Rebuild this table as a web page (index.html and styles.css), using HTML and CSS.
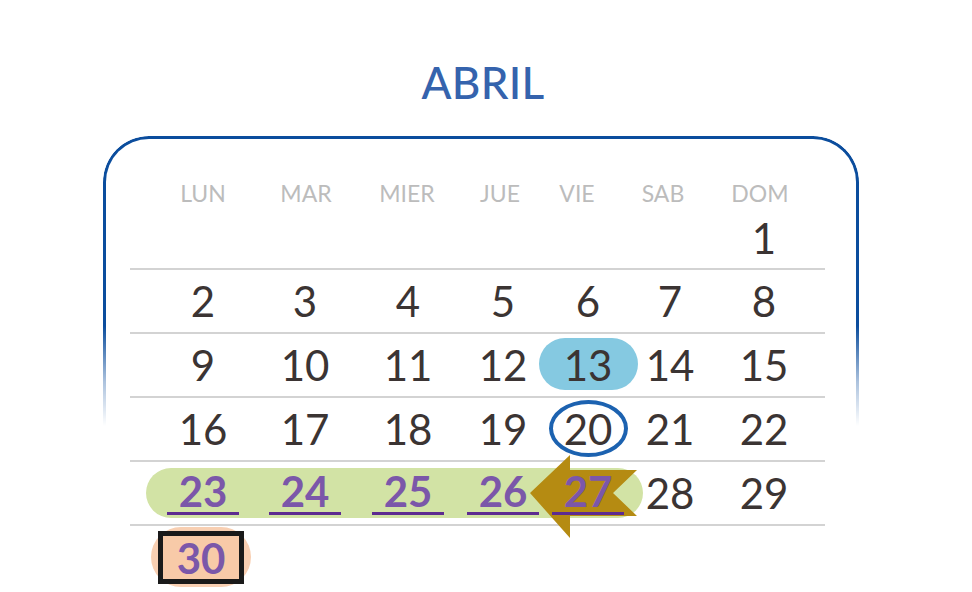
FILE: index.html
```html
<!DOCTYPE html>
<html lang="es">
<head>
<meta charset="utf-8">
<title>Abril</title>
<link rel="stylesheet" href="styles.css">
</head>
<body>
<div class="page">
  <h1 class="title">ABRIL</h1>
  <div class="cal">
    <div class="row head">
      <span>LUN</span><span>MAR</span><span>MIER</span><span>JUE</span><span>VIE</span><span>SAB</span><span>DOM</span>
    </div>
    <div class="row week first">
      <span></span><span></span><span></span><span></span><span></span><span></span><span class="cell">1</span>
    </div>
    <div class="row week">
      <span class="cell">2</span><span class="cell">3</span><span class="cell">4</span><span class="cell">5</span><span class="cell">6</span><span class="cell">7</span><span class="cell">8</span>
    </div>
    <div class="row week">
      <span class="cell">9</span><span class="cell">10</span><span class="cell">11</span><span class="cell">12</span>
      <span class="cell"><span class="pill-blue">13</span></span>
      <span class="cell">14</span><span class="cell">15</span>
    </div>
    <div class="row week">
      <span class="cell">16</span><span class="cell">17</span><span class="cell">18</span><span class="cell">19</span>
      <span class="cell"><span class="ring">20</span></span>
      <span class="cell">21</span><span class="cell">22</span>
    </div>
    <div class="row week span-row">
      <span class="green"></span>
      <svg class="arrow" width="107" height="83" viewBox="0 0 107 83" aria-hidden="true">
        <polygon points="0,38 40,0 40,15 107,15 83,38 107,61 40,61 40,83" fill="#b58b12"/>
      </svg>
      <span class="cell c1"><span class="ul">23</span></span>
      <span class="cell c2"><span class="ul">24</span></span>
      <span class="cell c3"><span class="ul">25</span></span>
      <span class="cell c4"><span class="ul">26</span></span>
      <span class="cell c5"><span class="ul">27</span></span>
      <span class="cell c6">28</span>
      <span class="cell c7">29</span>
    </div>
    <div class="row week last">
      <span class="cell"><span class="peach"><span class="box">30</span></span></span>
    </div>
  </div>
</div>
</body>
</html>
```

FILE: styles.css
```css
* { box-sizing: border-box; }

html, body {
  margin: 0;
  padding: 0;
  background: #ffffff;
}

body {
  font-family: Lato, "Open Sans", "Liberation Sans", sans-serif;
  width: 972px;
  height: 592px;
  overflow: hidden;
}

.page {
  display: flex;
  flex-direction: column;
  padding-top: 60px;
}

.title {
  margin: 0;
  height: 44px;
  font-size: 44px;
  line-height: 44px;
  font-weight: 500;
  color: #3563ad;
  text-align: center;
  padding-right: 6px;
  letter-spacing: 0.3px;
}

.cal {
  position: relative;
  margin: 32px 0 0 103px;
  width: 756px;
  height: 460px;
  padding: 42px 0 0 27px;
}

.cal::before {
  content: "";
  position: absolute;
  inset: 0;
  border: 3px solid #0b4d9d;
  border-bottom: none;
  border-radius: 46px 46px 0 0;
  -webkit-mask-image: linear-gradient(to bottom, #000 0, #000 190px, rgba(0,0,0,0.35) 245px, transparent 290px);
  mask-image: linear-gradient(to bottom, #000 0, #000 190px, rgba(0,0,0,0.35) 245px, transparent 290px);
  pointer-events: none;
}

.row {
  display: grid;
  grid-template-columns: 102px 102px 104px 86px 84px 80px 108px;
  width: 695px;
  padding-left: 22px;
}

.head {
  grid-template-columns: 102px 104px 98px 88px 66px 106px 88px;
  height: 30px;
  grid-template-rows: 30px;
  font-size: 23px;
  line-height: 30px;
  color: #bcbcbc;
  font-weight: 400;
}

.head span {
  text-align: center;
}

.week {
  grid-template-rows: 62px;
  font-size: 42px;
  color: #3b3433;
  border-bottom: 2px solid #d3d3d3;
}

.week.first {
  grid-template-rows: 60px;
}

.week.last {
  border-bottom: none;
}

.cell {
  display: flex;
  align-items: center;
  justify-content: center;
  line-height: 62px;
  z-index: 2;
}

.first .cell { line-height: 60px; }

.pill-blue {
  display: flex;
  align-items: center;
  justify-content: center;
  flex: none;
  width: 99px;
  height: 52px;
  border-radius: 26px;
  background: #85c9e1;
  line-height: 52px;
  margin-top: -3px;
  padding-top: 3px;
}

.ring {
  display: flex;
  align-items: center;
  justify-content: center;
  flex: none;
  width: 79px;
  height: 57px;
  border: 4px solid #1c62b0;
  border-radius: 50%;
  line-height: 49px;
  margin-top: -2px;
  padding-top: 2px;
}

.span-row .cell { grid-row: 1; }
.c1 { grid-column: 1; }
.c2 { grid-column: 2; }
.c3 { grid-column: 3; }
.c4 { grid-column: 4; }
.c5 { grid-column: 5; }
.c6 { grid-column: 6; }
.c7 { grid-column: 7; }

.green {
  grid-row: 1;
  grid-column: 1 / 6;
  align-self: center;
  height: 50px;
  margin-left: -6px;
  margin-right: -13px;
  border-radius: 25px;
  background: #d2e3a5;
  z-index: 0;
}

.arrow {
  grid-row: 1;
  grid-column: 5;
  justify-self: start;
  align-self: center;
  margin-left: -16px;
  margin-top: 7px;
  z-index: 1;
  display: block;
}

.ul {
  display: inline-block;
  padding: 0 12px;
  line-height: 41px;
  color: #7b57a9;
  font-weight: 700;
  border-bottom: 3px solid #5d2b90;
}

.peach {
  display: flex;
  align-items: center;
  justify-content: center;
  flex: none;
  width: 100px;
  height: 60px;
  border-radius: 30px;
  background: #f8cfb2;
  margin-left: -4px;
}

.box {
  display: flex;
  align-items: center;
  justify-content: center;
  width: 86px;
  height: 53px;
  border: 5px solid #1a1a1a;
  background: #f8caa8;
  color: #7b57a9;
  font-weight: 700;
  line-height: 43px;
  padding-top: 2px;
}
```
